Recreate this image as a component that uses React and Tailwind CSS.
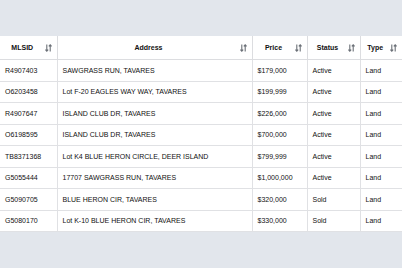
import React from "react";

const rows = [
  ["R4907403", "SAWGRASS RUN, TAVARES", "$179,000", "Active", "Land"],
  ["O6203458", "Lot F-20 EAGLES WAY WAY, TAVARES", "$199,999", "Active", "Land"],
  ["R4907647", "ISLAND CLUB DR, TAVARES", "$226,000", "Active", "Land"],
  ["O6198595", "ISLAND CLUB DR, TAVARES", "$700,000", "Active", "Land"],
  ["TB8371368", "Lot K4 BLUE HERON CIRCLE, DEER ISLAND", "$799,999", "Active", "Land"],
  ["G5055444", "17707 SAWGRASS RUN, TAVARES", "$1,000,000", "Active", "Land"],
  ["G5090705", "BLUE HERON CIR, TAVARES", "$320,000", "Sold", "Land"],
  ["G5080170", "Lot K-10 BLUE HERON CIR, TAVARES", "$330,000", "Sold", "Land"],
];

const columns = [
  { label: "MLSID", width: "w-[57px]" },
  { label: "Address", width: "w-[195px]" },
  { label: "Price", width: "w-[55px]" },
  { label: "Status", width: "w-[53px]" },
  { label: "Type", width: "w-[42px]" },
];

// down arrow + up arrow, like the table sort toggle
const SortIcon = () => (
  <svg width="7" height="8" viewBox="0 0 7 8" className="shrink-0">
    <path d="M1.8 0.5v6.5M0.4 5.6l1.4 1.6 1.4-1.6" stroke="#6b7077" strokeWidth="1.1" fill="none" />
    <path d="M5.2 7.5V1M3.8 2.4l1.4-1.6 1.4 1.6" stroke="#6b7077" strokeWidth="1.1" fill="none" />
  </svg>
);

export default function App() {
  return (
    <div
      className="w-[402px] h-[268px] overflow-hidden bg-[#e2e6ec]"
      style={{ fontFamily: '"Liberation Sans", Arial, sans-serif' }}
    >
      <div className="h-[36px]" />
      <table className="w-[402px] table-fixed border-collapse bg-white text-[#111]">
        <thead>
          <tr className="h-[23.5px]">
            {columns.map((col) => (
              <th
                key={col.label}
                className={`${col.width} border-r border-b border-[#dcdde0] p-0 last:border-r-0`}
              >
                <div className="flex items-center pr-[5px]">
                  <span className="flex-1 text-center text-[7px] font-bold leading-none">
                    {col.label}
                  </span>
                  <SortIcon />
                </div>
              </th>
            ))}
          </tr>
        </thead>
        <tbody>
          {rows.map((row) => (
            <tr key={row[0]} className="h-[21.5px]">
              {row.map((cell, i) => (
                <td
                  key={i}
                  className="border-r border-b border-[#e0e1e4] px-[5px] py-0 text-[7px] leading-none whitespace-nowrap overflow-hidden last:border-r-0"
                >
                  {cell}
                </td>
              ))}
            </tr>
          ))}
        </tbody>
      </table>
    </div>
  );
}
